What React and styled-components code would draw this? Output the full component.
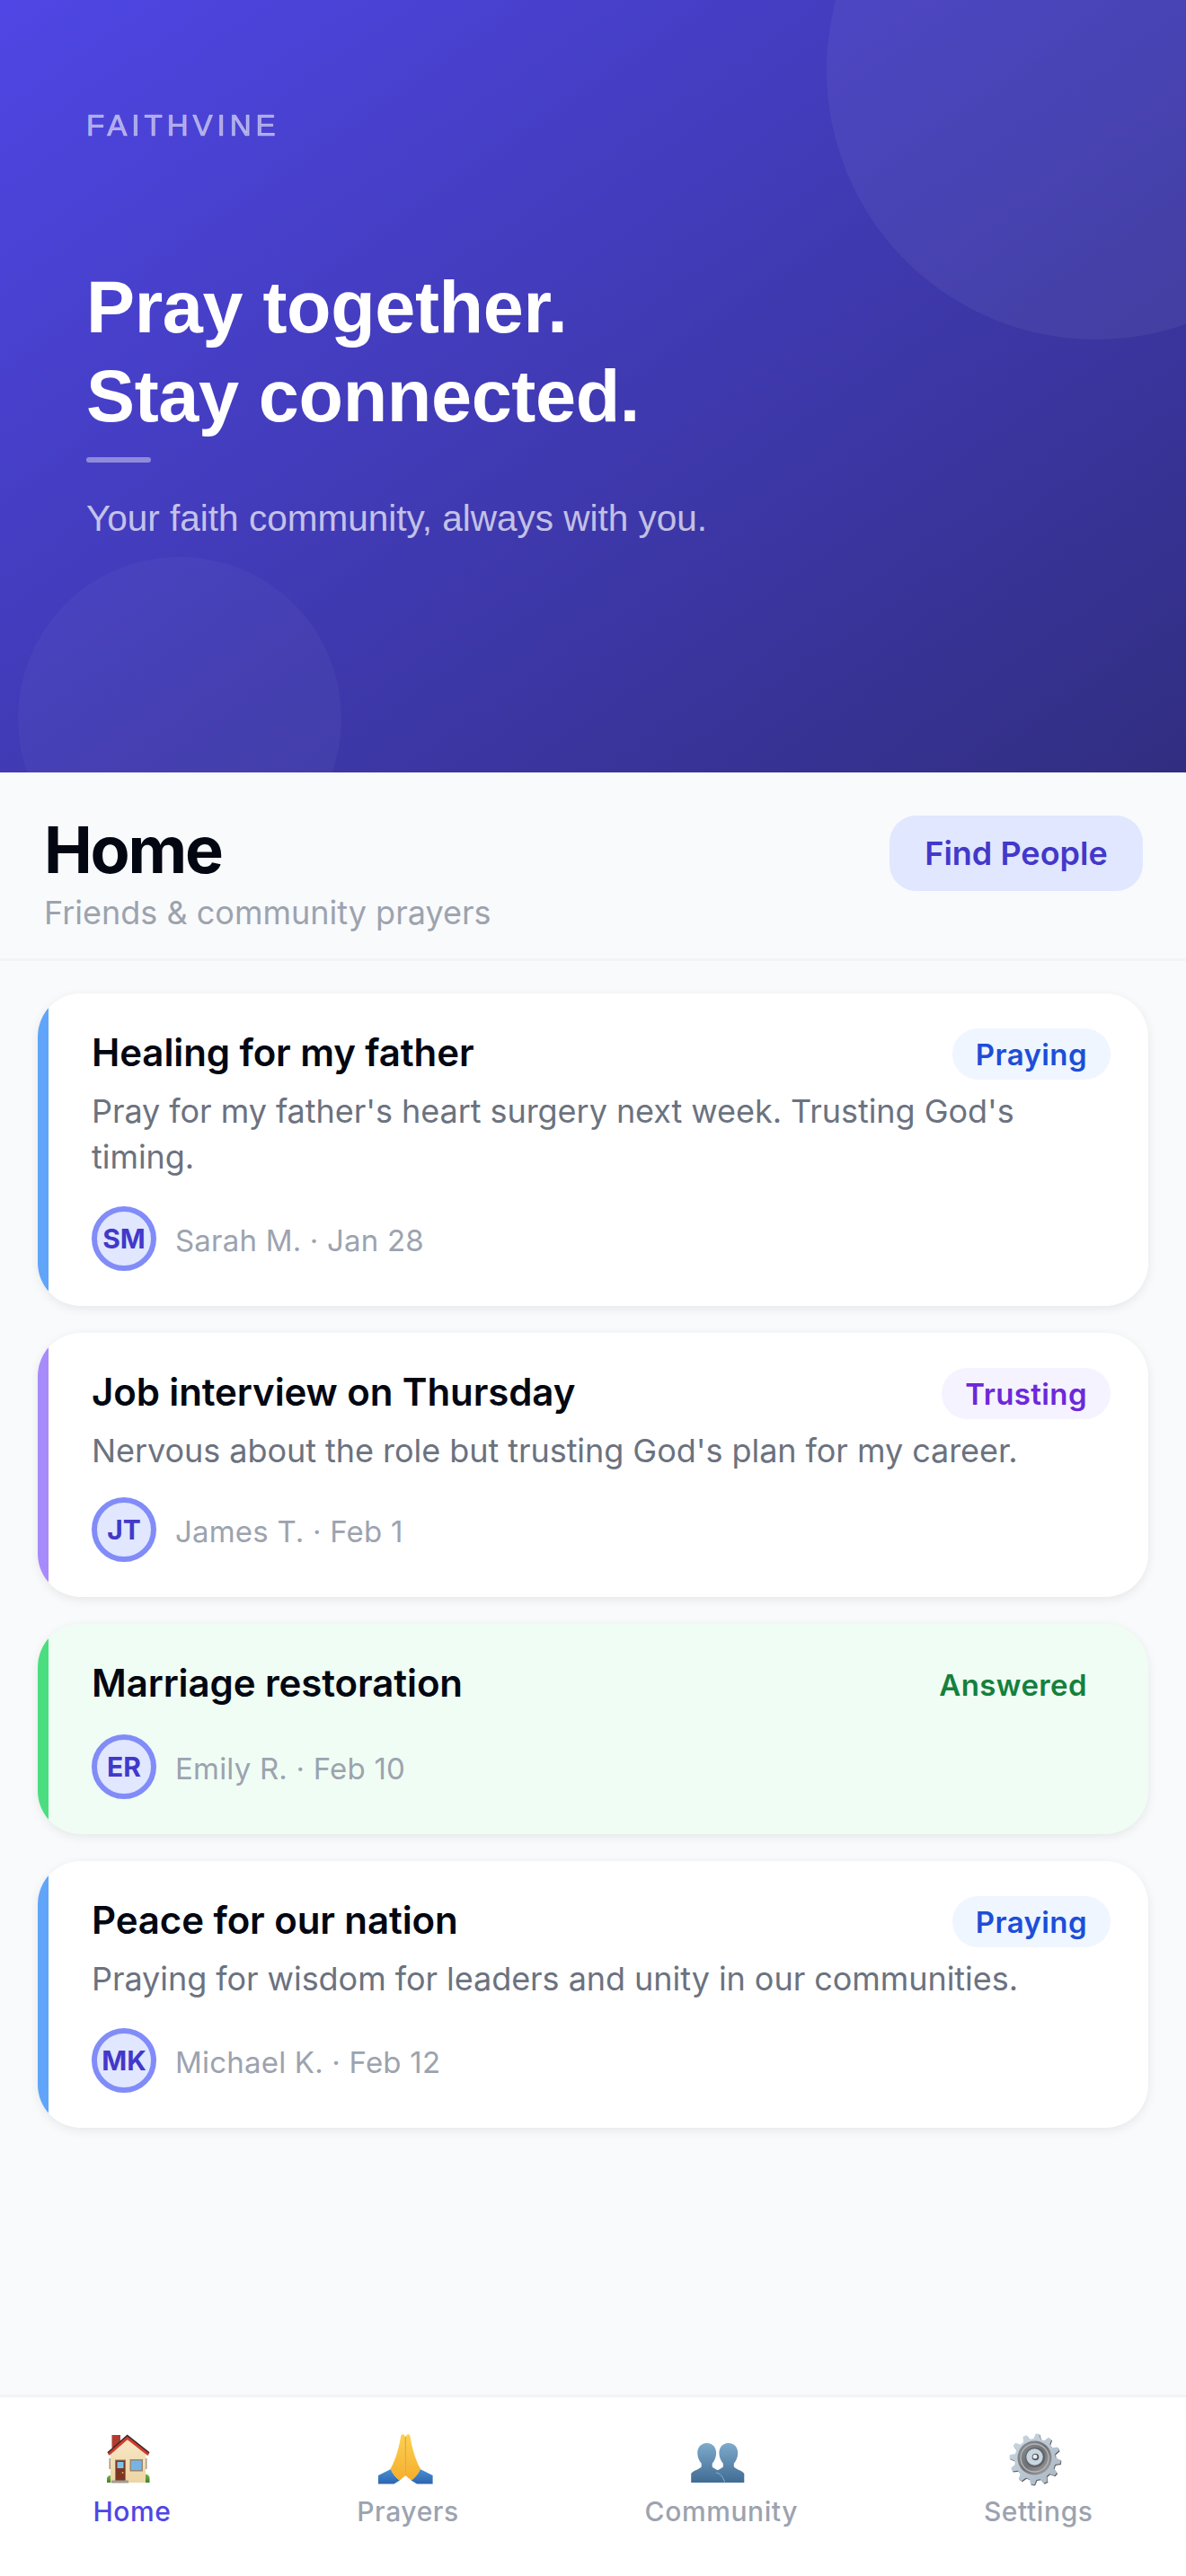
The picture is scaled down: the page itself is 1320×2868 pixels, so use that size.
import React from "react";
import styled, { createGlobalStyle } from "styled-components";

const Global = createGlobalStyle`
  html, body { margin: 0; padding: 0; background: #f9fafb; }
  * { box-sizing: border-box; }
  #root { width: 1320px; height: 2868px; }
`;
const Screen = styled.div`
  width: 1320px; height: 2868px; display: flex; flex-direction: column;
  background: #f9fafb; overflow: hidden; font-family: Inter, "Liberation Sans", sans-serif;
`;
const Hero = styled.section`
  position: relative; height: 860px; flex: none; overflow: hidden; padding: 121px 96px 0;
  font-family: "Liberation Sans", Arial, sans-serif;
  background: linear-gradient(145deg, #4f46e5 0%, #312e81 100%);
`;
const TopCircle = styled.div`
  position: absolute; top: -222px; right: -200px; width: 600px; height: 600px; border-radius: 50%;
  background: rgba(255,255,255,.05);
`;
const BottomCircle = styled.div`
  position: absolute; bottom: -120px; left: 20px; width: 360px; height: 360px; border-radius: 50%;
  background: rgba(255,255,255,.035);
`;
const Brand = styled.div`
  font-size: 33px; line-height: 38px; font-weight: 400; letter-spacing: 5px; color: rgba(255,255,255,.55);
  -webkit-text-stroke: .7px rgba(255,255,255,.55);
`;
const Headline = styled.h1`
  margin: 134px 0 0; font-size: 81px; line-height: 99px; font-weight: 700; letter-spacing: -.35px; color: #fff;
`;
const Rule = styled.div`
  width: 72px; height: 6px; border-radius: 6px; background: rgba(255,255,255,.4); margin-top: 18px;
`;
const Tagline = styled.p`
  margin: 37px 0 0; font-size: 40.5px; line-height: 50px; color: rgba(255,255,255,.7);
`;
const Header = styled.header`
  height: 210px; flex: none; display: flex; justify-content: space-between; align-items: flex-start;
  padding: 45px 48px 0 49px; border-bottom: 3px solid #f3f4f6;
`;
const Title = styled.h2`
  margin: 0; font-size: 72px; line-height: 81px; font-weight: 700; letter-spacing: -2.2px; color: #030712;
`;
const Subtitle = styled.p`
  margin: 6px 0 0; font-size: 36px; line-height: 48px; color: #9ca3af;
`;
const FindButton = styled.button`
  height: 84px; width: 282px; margin-top: 3px; border: 0; border-radius: 30px; background: #e0e7ff; color: #4338ca;
  font: 600 36px/1 Inter, sans-serif;
`;
const List = styled.main`
  flex: 1; display: flex; flex-direction: column; gap: 30px; padding: 36px 42px 0;
`;
const Card = styled.article`
  position: relative; overflow: hidden; border-radius: 48px;
  background: ${p => p.$bg}; padding: 39px 42px 39px 60px;
  box-shadow: 0 3px 12px rgba(0,0,0,.08);
  &::before {
    content: ""; position: absolute; left: 0; top: 0; bottom: 0; width: 12px; background: ${p => p.$bar};
  }
`;
const CardTop = styled.div`
  display: flex; justify-content: space-between; align-items: flex-start;
`;
const CardTitle = styled.h3`
  margin: 0; font-size: 42px; line-height: 54px; font-weight: 600; letter-spacing: -.1px; color: #030712;
`;
const Status = styled.span`
  height: 57px; padding: 0 26px; border-radius: 30px; display: flex; align-items: center;
  font-size: 33px; font-weight: 600; letter-spacing: .4px; color: ${p => p.$fg}; background: ${p => p.$bg};
`;
const Body = styled.p`
  margin: 10px 0 -1px; font-size: 36px; line-height: 51px; letter-spacing: -.05px; color: #6b7280;
`;
const Meta = styled.div`
  display: flex; align-items: center; gap: 21px; margin-top: ${p => p.$gap}px;
`;
const Avatar = styled.div`
  width: 72px; height: 72px; flex: none; border-radius: 50%; border: 6px solid #818cf8; background: #e0e7ff;
  display: flex; align-items: center; justify-content: center;
  font-size: 30px; font-weight: 700; color: #4338ca;
`;
const Byline = styled.span`
  font-size: 33px; padding-top: 4px; letter-spacing: .2px; color: #9ca3af;
`;
const Nav = styled.nav`
  height: 202px; flex: none; background: #fff; border-top: 3px solid #f3f4f6;
  display: flex; justify-content: space-around; padding-top: 33px;
`;
const NavItem = styled.div`
  display: flex; flex-direction: column; align-items: center; gap: 6px;
  font-size: 30px; line-height: 36px; font-weight: 500; letter-spacing: .6px;
  color: ${p => (p.$active ? "#4f46e5" : "#9ca3af")};
`;
const EmojiSvg = styled.svg`
  width: 70px; height: 70px; flex: none; margin-right: 7px; display: block;
`;

const HouseIcon = () => (
  <EmojiSvg viewBox="0 0 70 70">
    <defs>
      <linearGradient id="wall" x1="0" y1="0" x2="0" y2="1"><stop offset="0" stopColor="#f8e8c6" /><stop offset="1" stopColor="#ecd5a4" /></linearGradient>
      <linearGradient id="bush" x1="0" y1="0" x2="0" y2="1"><stop offset="0" stopColor="#7cb548" /><stop offset="1" stopColor="#3f7f2c" /></linearGradient>
    </defs>
    <rect x="16.5" y="9" width="9.5" height="14" fill="#b33c30" />
    <path d="M11 62V57a4.2 4.2 0 0 1 8 0v5z" fill="url(#bush)" />
    <path d="M50 62V57a4.2 4.2 0 0 1 8.5 0v5z" fill="url(#bush)" />
    <rect x="13.5" y="35" width="2" height="12" fill="#a8988a" />
    <rect x="53.5" y="35" width="2" height="12" fill="#a8988a" />
    <path d="M15 30L34 13L54 30V62H15Z" fill="url(#wall)" />
    <rect x="20" y="36.5" width="12" height="23.5" fill="#8f7d6c" />
    <rect x="21" y="37.5" width="10" height="22.5" fill="#7b3623" />
    <rect x="22.5" y="39" width="7" height="7" fill="#7fc1e8" />
    <circle cx="28.6" cy="51" r=".9" fill="#e8b84a" />
    <rect x="36.5" y="36" width="14.5" height="13.5" fill="#9a8672" />
    <rect x="38" y="37.5" width="11.5" height="10.5" fill="#74b5e5" />
    <rect x="16" y="59.5" width="19" height="3" fill="#a29c92" />
    <path d="M12.5 29.5L33.7 10.8L57.5 29.5" fill="none" stroke="#3a2a28" strokeWidth="3.4" strokeLinejoin="miter" />
    <path d="M12.8 30.8L33.7 12.4L57.2 30.8" fill="none" stroke="#d23b30" strokeWidth="2.8" strokeLinejoin="miter" />
  </EmojiSvg>
);

const HandsIcon = () => (
  <EmojiSvg viewBox="0 0 70 70">
    <defs>
      <linearGradient id="skin" x1="0" y1="0" x2="0" y2="1"><stop offset="0" stopColor="#fdd053" /><stop offset="1" stopColor="#f5ae2b" /></linearGradient>
      <linearGradient id="cuff" x1="0" y1="0" x2="0" y2="1"><stop offset="0" stopColor="#4a8fd6" /><stop offset="1" stopColor="#2c66ad" /></linearGradient>
    </defs>
    <path d="M5 54L19 47C21 52 25 57 29 59.5L22.5 63.5H5Z" fill="url(#cuff)" />
    <path d="M65.6 54L51.6 47C49.6 52 45.6 57 41.6 59.5L48 63.5H65.6Z" fill="url(#cuff)" />
    <path d="M35 11C34.4 8 31 7.4 30.2 10C28.6 20 25 36 18.6 46.6C20.6 52 25 57.5 29 59.5L34.8 54.5Z" fill="url(#skin)" />
    <path d="M35.6 11C36.2 8 39.6 7.4 40.4 10C42 20 45.6 36 52 46.6C50 52 45.6 57.5 41.6 59.5L35.8 54.5Z" fill="url(#skin)" />
    <path d="M35.3 11V54.5" stroke="#d98a1e" strokeWidth=".9" />
  </EmojiSvg>
);

const bust = "c-6.6 0-10.6 5-10.4 11.4c.1 4.4 2 8.6 4.4 11.4v3.6c-3 3-10 4.4-11.5 7.6v10h35v-10c-1.5-3.2-8.5-4.6-11.5-7.6v-3.6c2.4-2.8 4.3-7 4.4-11.4c.2-6.4-3.8-11.4-10.4-11.4z";
const PeopleIcon = () => (
  <EmojiSvg viewBox="0 0 70 70">
    <defs>
      <linearGradient id="bust" gradientUnits="userSpaceOnUse" x1="0" y1="18" x2="0" y2="63"><stop offset="0" stopColor="#7eaacb" /><stop offset="1" stopColor="#3f6a92" /></linearGradient>
    </defs>
    <path d={`M46.8 18${bust}`} fill="url(#bust)" />
    <path d={`M22.7 18${bust}`} fill="url(#bust)" />
    <path d="M33 51c4 .5 8 4 10 12" fill="none" stroke="#9cc0da" strokeWidth=".8" />
  </EmojiSvg>
);

const gearPath = (() => {
  const cx = 35, cy = 36, teeth = 12, out = 28.5, root = 23;
  let d = "";
  for (let i = 0; i < teeth; i++) {
    const a = (i / teeth) * Math.PI * 2 - Math.PI / 2 + 0.1;
    const st = (Math.PI * 2) / teeth;
    const pts = [[root, a - st * 0.32], [out, a - st * 0.14], [out, a + st * 0.14], [root, a + st * 0.32]];
    pts.forEach(([r, t], j) => {
      d += `${i === 0 && j === 0 ? "M" : "L"}${(cx + r * Math.cos(t)).toFixed(2)} ${(cy + r * Math.sin(t)).toFixed(2)}`;
    });
  }
  return d + "Z";
})();

const GearIcon = () => (
  <EmojiSvg viewBox="0 0 70 70">
    <defs>
      <linearGradient id="steel" x1="0" y1="0" x2="1" y2="1"><stop offset="0" stopColor="#cbd8e2" /><stop offset="1" stopColor="#a9b6c2" /></linearGradient>
      <linearGradient id="ring" x1="0" y1="0" x2="1" y2="1"><stop offset="0" stopColor="#8f9296" /><stop offset=".5" stopColor="#6f7276" /><stop offset="1" stopColor="#a6a4a4" /></linearGradient>
    </defs>
    <path d={gearPath} transform="translate(.8 1)" fill="#5a5d62" />
    <path d={gearPath} fill="url(#steel)" />
    <circle cx="34.5" cy="34.5" r="19" fill="url(#ring)" />
    <circle cx="34.5" cy="34.5" r="15.5" fill="none" stroke="#b4b6b8" strokeWidth="1.4" />
    <circle cx="35" cy="34" r="11" fill="#5f6266" />
    <circle cx="34.5" cy="33.5" r="9.2" fill="#c8d6e0" />
    <circle cx="35.5" cy="33.5" r="3.8" fill="#55565a" />
    <circle cx="35" cy="33.2" r="2.4" fill="#e8eef2" />
  </EmojiSvg>
);

const cards = [
  { t: "Healing for my father", b: "Pray for my father's heart surgery next week. Trusting God's timing.", i: "SM", m: "Sarah M. · Jan 28", s: "Praying", bar: "#60a5fa", fg: "#1d4ed8", sb: "#eff6ff", bg: "#fff", gap: 30 },
  { t: "Job interview on Thursday", b: "Nervous about the role but trusting God's plan for my career.", i: "JT", m: "James T. · Feb 1", s: "Trusting", bar: "#a78bfa", fg: "#6d28d9", sb: "#f5f3ff", bg: "#fff", gap: 27 },
  { t: "Marriage restoration", i: "ER", m: "Emily R. · Feb 10", s: "Answered", bar: "#4ade80", fg: "#15803d", sb: "#f0fdf4", bg: "#f0fdf4", gap: 27 },
  { t: "Peace for our nation", b: "Praying for wisdom for leaders and unity in our communities.", i: "MK", m: "Michael K. · Feb 12", s: "Praying", bar: "#60a5fa", fg: "#1d4ed8", sb: "#eff6ff", bg: "#fff", gap: 30 },
];

const tabs = [
  { l: "Home", Icon: HouseIcon },
  { l: "Prayers", Icon: HandsIcon },
  { l: "Community", Icon: PeopleIcon },
  { l: "Settings", Icon: GearIcon },
];

export default function App() {
  return (
    <Screen>
      <Global />
      <Hero>
        <TopCircle /><BottomCircle />
        <Brand>FAITHVINE</Brand>
        <Headline>Pray together.<br />Stay connected.</Headline>
        <Rule />
        <Tagline>Your faith community, always with you.</Tagline>
      </Hero>
      <Header>
        <div><Title>Home</Title><Subtitle>Friends &amp; community prayers</Subtitle></div>
        <FindButton>Find People</FindButton>
      </Header>
      <List>
        {cards.map(c => (
          <Card key={c.t} $bar={c.bar} $bg={c.bg}>
            <CardTop><CardTitle>{c.t}</CardTitle><Status $fg={c.fg} $bg={c.sb}>{c.s}</Status></CardTop>
            {c.b && <Body>{c.b}</Body>}
            <Meta $gap={c.gap}><Avatar>{c.i}</Avatar><Byline>{c.m}</Byline></Meta>
          </Card>
        ))}
      </List>
      <Nav>
        {tabs.map(({ l, Icon }, i) => (
          <NavItem key={l} $active={i === 0}><Icon />{l}</NavItem>
        ))}
      </Nav>
    </Screen>
  );
}
